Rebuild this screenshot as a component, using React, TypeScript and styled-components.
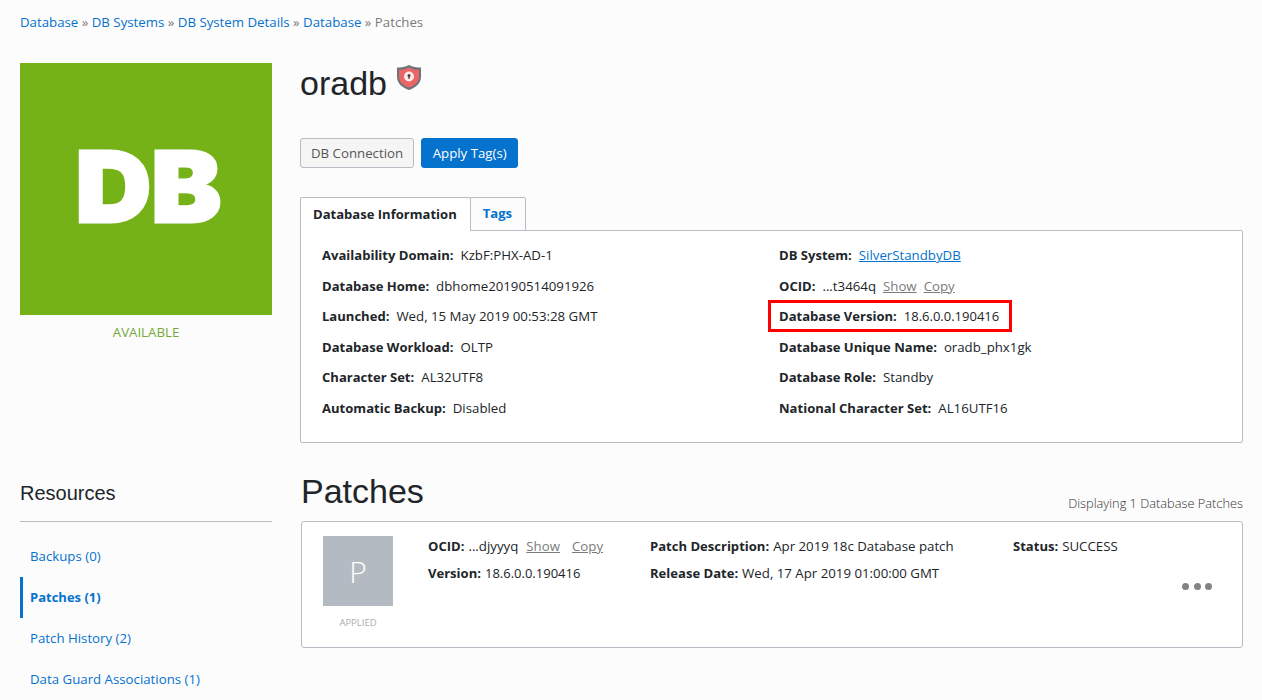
import React from "react";
import styled, { createGlobalStyle } from "styled-components";

const GlobalStyle = createGlobalStyle`
  html, body {
    margin: 0;
    padding: 0;
    background: #fcfcfc;
    height: 700px;
    overflow: hidden;
  }
  body {
    font-family: "Open Sans", "Noto Sans", sans-serif;
    font-size: 13.25px;
    color: #212529;
  }
`;

const Page = styled.div`
  padding: 0 19px 0 20px;
`;

const Breadcrumbs = styled.div`
  display: flex;
  align-items: center;
  height: 44px;
  white-space: pre;
  color: #7b7b7b;
`;

const Crumb = styled.a`
  color: #0572ce;
`;

const Layout = styled.div`
  display: grid;
  grid-template-columns: 252px 943px;
  column-gap: 28px;
  margin-top: 19px;
`;

const Side = styled.aside`
  display: flex;
  flex-direction: column;
`;

const Tile = styled.div`
  width: 252px;
  height: 252px;
  box-sizing: border-box;
  padding: 0 0 5px 4px;
  background: #74b218;
  color: #fff;
  display: flex;
  align-items: center;
  justify-content: center;
`;

const TileText = styled.span`
  font-family: "Inter", "Open Sans", sans-serif;
  font-weight: 900;
  font-size: 97px;
  line-height: 1;
  -webkit-text-stroke: 3px #fff;
  transform: scaleX(1.08);
`;

const TileStatus = styled.div`
  margin-top: 8px;
  text-align: center;
  color: #74a83a;
  line-height: 18px;
`;

const SideTitle = styled.h3`
  margin: 0;
  margin-top: 140px;
  padding-bottom: 16px;
  border-bottom: 1px solid #b8bcc4;
  font-family: "Liberation Sans", Arial, sans-serif;
  font-weight: 400;
  font-size: 20px;
  line-height: 24px;
  color: #212529;
`;

const SideMenu = styled.nav`
  display: flex;
  flex-direction: column;
  margin-top: 14px;
`;

const SideItem = styled.a<{ $active?: boolean }>`
  display: flex;
  align-items: center;
  height: 41px;
  box-sizing: border-box;
  padding: 0 0 2px ${(p) => (p.$active ? 7 : 10)}px;
  border-left: ${(p) => (p.$active ? "3px solid #0572ce" : "none")};
  color: #0572ce;
  font-weight: ${(p) => (p.$active ? 700 : 400)};
  font-size: ${(p) => (p.$active ? 13 : 13.25)}px;
`;

const Main = styled.main`
  display: flex;
  flex-direction: column;
`;

const TitleRow = styled.div`
  display: flex;
  align-items: flex-start;
  gap: 9px;
  height: 75px;
`;

const Title = styled.h1`
  margin: 0;
  font-family: "Liberation Sans", Arial, sans-serif;
  font-weight: 400;
  font-size: 34px;
  line-height: 40px;
  color: #212529;
`;

const ShieldIcon = styled.svg`
  width: 26px;
  height: 27px;
  margin-top: 1px;
`;

const Actions = styled.div`
  display: flex;
  gap: 7px;
`;

const Button = styled.button<{ $primary?: boolean }>`
  height: 30px;
  padding: 0 ${(p) => (p.$primary ? 10.5 : 10)}px;
  font: inherit;
  border-radius: 3px;
  border: 1px solid ${(p) => (p.$primary ? "#0572ce" : "#b8bcc4")};
  background: ${(p) => (p.$primary ? "#0572ce" : "#f5f5f5")};
  color: ${(p) => (p.$primary ? "#fff" : "#555")};
`;

const Tabs = styled.div`
  display: flex;
  margin-top: 29px;
`;

const Tab = styled.div<{ $active?: boolean }>`
  display: flex;
  align-items: center;
  height: 34px;
  box-sizing: border-box;
  padding: 0 13px 2px 12px;
  background: ${(p) => (p.$active ? "#fff" : "#fcfcfc")};
  border: 1px solid #b8bcc4;
  border-bottom: ${(p) => (p.$active ? "none" : "1px solid #b8bcc4")};
  border-radius: 2px 2px 0 0;
  margin-right: -1px;
  font-weight: 700;
  font-size: 13.05px;
  color: ${(p) => (p.$active ? "#212529" : "#0572ce")};
  position: relative;
  z-index: ${(p) => (p.$active ? 1 : 0)};
`;

const InfoPanel = styled.section`
  margin-top: -1px;
  height: 213px;
  box-sizing: border-box;
  background: #fff;
  border: 1px solid #b8bcc4;
  border-radius: 0 2px 2px 2px;
  padding: 9px 21px;
  display: grid;
  grid-template-columns: 457px 1fr;
`;

const InfoColumn = styled.div`
  display: flex;
  flex-direction: column;
`;

const InfoRow = styled.div<{ $boxed?: boolean }>`
  display: flex;
  align-items: center;
  height: 30.5px;
  gap: 7px;
  white-space: pre;
  position: relative;
  &::after {
    content: "";
    display: ${(p) => (p.$boxed ? "block" : "none")};
    position: absolute;
    left: -11px;
    top: -1px;
    width: 244px;
    height: 32px;
    box-sizing: border-box;
    border: 3px solid #f00;
  }
`;

const Label = styled.b`
  font-weight: 700;
  font-size: 13.05px;
`;

const Value = styled.span``;

const VersionValue = styled.span`
  font-size: 13px;
`;

const TextLink = styled.a`
  color: #0572ce;
  text-decoration: underline;
`;

const Muted = styled.a<{ $gap?: number }>`
  color: #7b7b7b;
  text-decoration: underline;
  margin-left: ${(p) => p.$gap ?? 0}px;
`;

const SectionHead = styled.div`
  display: flex;
  justify-content: space-between;
  align-items: flex-end;
  margin-top: 27px;
  height: 51px;
`;

const SectionTitle = styled.h2`
  margin: 0;
  font-family: "Liberation Sans", Arial, sans-serif;
  font-weight: 400;
  font-size: 34px;
  line-height: 40px;
  padding-bottom: 10px;
  padding-left: 1px;
  color: #212529;
`;

const Count = styled.div`
  color: #333;
  font-size: 12.8px;
  font-weight: 300;
  line-height: 18px;
  padding-bottom: 9px;
`;

const PatchCard = styled.section`
  height: 127px;
  margin-left: 1px;
  box-sizing: border-box;
  background: #fff;
  border: 1px solid #b8bcc4;
  border-radius: 3px;
  padding: 14px 21px;
  display: flex;
  position: relative;
`;

const Badge = styled.div`
  width: 70px;
  display: flex;
  flex-direction: column;
  align-items: center;
`;

const BadgeBox = styled.div`
  width: 70px;
  height: 70px;
  background: #b4bac2;
  color: #fff;
  display: flex;
  align-items: center;
  justify-content: center;
  font-size: 30px;
  font-weight: 300;
`;

const BadgeLabel = styled.div`
  margin-top: 10px;
  font-size: 9.5px;
  line-height: 14px;
  color: #aeaeae;
`;

const PatchColumn = styled.div<{ $w: number }>`
  width: ${(p) => p.$w}px;
  display: flex;
  flex-direction: column;
  gap: 9px;
`;

const PatchLine = styled.div`
  display: flex;
  gap: 4px;
  height: 18px;
  line-height: 18px;
  white-space: pre;
`;

const Columns = styled.div`
  display: flex;
  margin-left: 35px;
  margin-top: 1px;
`;

const Dots = styled.div`
  position: absolute;
  right: 30px;
  top: 61px;
  display: flex;
  gap: 4.5px;
`;

const Dot = styled.span`
  width: 7px;
  height: 7px;
  border-radius: 50%;
  background: #838383;
`;

const left: [string, string][] = [
  ["Availability Domain:", "KzbF:PHX-AD-1"],
  ["Database Home:", "dbhome20190514091926"],
  ["Launched:", "Wed, 15 May 2019 00:53:28 GMT"],
  ["Database Workload:", "OLTP"],
  ["Character Set:", "AL32UTF8"],
  ["Automatic Backup:", "Disabled"],
];

export default function App() {
  return (
    <Page>
      <GlobalStyle />
      <Breadcrumbs>
        <Crumb>Database</Crumb> » <Crumb>DB Systems</Crumb> » <Crumb>DB System Details</Crumb> »{" "}
        <Crumb>Database</Crumb> » Patches
      </Breadcrumbs>
      <Layout>
        <Side>
          <Tile>
            <TileText>DB</TileText>
          </Tile>
          <TileStatus>AVAILABLE</TileStatus>
          <SideTitle>Resources</SideTitle>
          <SideMenu>
            <SideItem>Backups (0)</SideItem>
            <SideItem $active>Patches (1)</SideItem>
            <SideItem>Patch History (2)</SideItem>
            <SideItem>Data Guard Associations (1)</SideItem>
          </SideMenu>
        </Side>
        <Main>
          <TitleRow>
            <Title>oradb</Title>
            <ShieldIcon viewBox="0 0 26 27">
              <path d="M13 1 C16.5 2.8 21 3.6 25 3.6 V13 C25 19.5 19 24 13 26 C7 24 1 19.5 1 13 V3.6 C5 3.6 9.5 2.8 13 1 Z" fill="#6f7378" />
              <path d="M13 3.4 C16.2 5 19.8 5.7 23 5.8 V13 C23 18.2 18 22 13 23.6 C8 22 3 18.2 3 13 V5.8 C6.2 5.7 9.8 5 13 3.4 Z" fill="#ea6565" />
              <circle cx="13" cy="12.5" r="5" fill="#fde9e9" />
              <circle cx="13" cy="11.4" r="1.5" fill="#5a3a3a" />
              <rect x="12.3" y="11.5" width="1.4" height="3.4" fill="#5a3a3a" />
            </ShieldIcon>
          </TitleRow>
          <Actions>
            <Button>DB Connection</Button>
            <Button $primary>Apply Tag(s)</Button>
          </Actions>
          <Tabs>
            <Tab $active>Database Information</Tab>
            <Tab>Tags</Tab>
          </Tabs>
          <InfoPanel>
            <InfoColumn>
              {left.map(([k, v]) => (
                <InfoRow key={k}>
                  <Label>{k}</Label>
                  <Value>{v}</Value>
                </InfoRow>
              ))}
            </InfoColumn>
            <InfoColumn>
              <InfoRow>
                <Label>DB System:</Label>
                <TextLink>SilverStandbyDB</TextLink>
              </InfoRow>
              <InfoRow>
                <Label>OCID:</Label>
                <Value>...t3464q</Value>
                <Muted>Show</Muted>
                <Muted>Copy</Muted>
              </InfoRow>
              <InfoRow $boxed>
                <Label>Database Version:</Label>
                <VersionValue>18.6.0.0.190416</VersionValue>
              </InfoRow>
              <InfoRow>
                <Label>Database Unique Name:</Label>
                <Value>oradb_phx1gk</Value>
              </InfoRow>
              <InfoRow>
                <Label>Database Role:</Label>
                <Value>Standby</Value>
              </InfoRow>
              <InfoRow>
                <Label>National Character Set:</Label>
                <Value>AL16UTF16</Value>
              </InfoRow>
            </InfoColumn>
          </InfoPanel>
          <SectionHead>
            <SectionTitle>Patches</SectionTitle>
            <Count>Displaying 1 Database Patches</Count>
          </SectionHead>
          <PatchCard>
            <Badge>
              <BadgeBox>P</BadgeBox>
              <BadgeLabel>APPLIED</BadgeLabel>
            </Badge>
            <Columns>
              <PatchColumn $w={222}>
                <PatchLine>
                  <Label>OCID:</Label>
                  <Value>...djyyyq</Value>
                  <Muted $gap={4}>Show</Muted>
                  <Muted $gap={8}>Copy</Muted>
                </PatchLine>
                <PatchLine>
                  <Label>Version:</Label>
                  <VersionValue>18.6.0.0.190416</VersionValue>
                </PatchLine>
              </PatchColumn>
              <PatchColumn $w={363}>
                <PatchLine>
                  <Label>Patch Description:</Label>
                  <Value>Apr 2019 18c Database patch</Value>
                </PatchLine>
                <PatchLine>
                  <Label>Release Date:</Label>
                  <Value>Wed, 17 Apr 2019 01:00:00 GMT</Value>
                </PatchLine>
              </PatchColumn>
              <PatchColumn $w={120}>
                <PatchLine>
                  <Label>Status:</Label>
                  <Value>SUCCESS</Value>
                </PatchLine>
              </PatchColumn>
            </Columns>
            <Dots>
              <Dot />
              <Dot />
              <Dot />
            </Dots>
          </PatchCard>
        </Main>
      </Layout>
    </Page>
  );
}
